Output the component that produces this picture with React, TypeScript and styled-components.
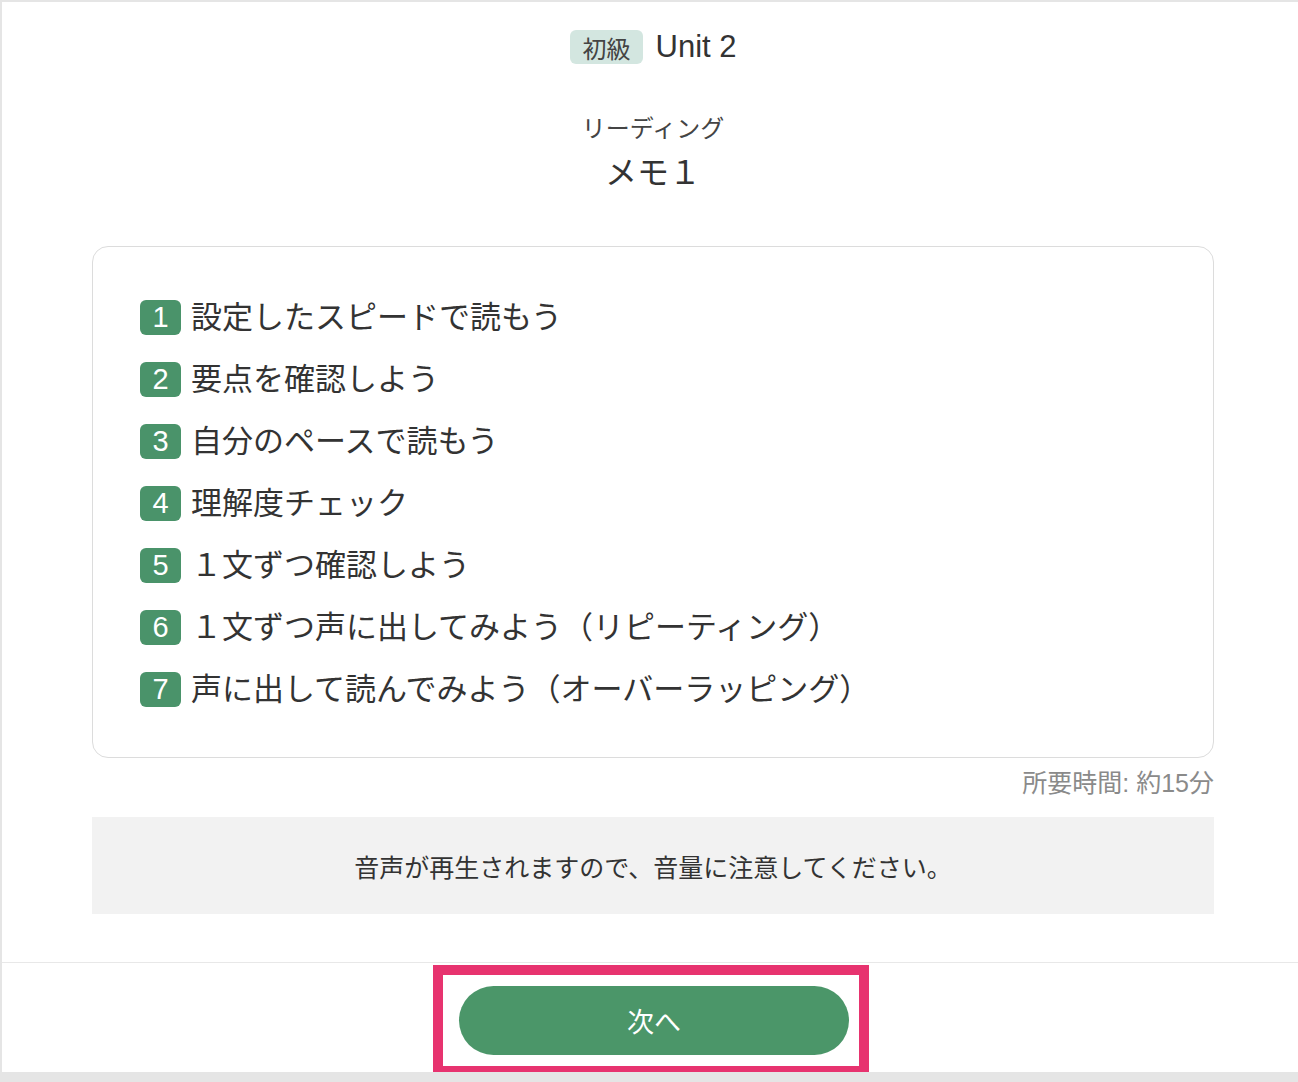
import React from "react";
import styled, { createGlobalStyle } from "styled-components";

const GlobalStyle = createGlobalStyle`
  html, body {
    margin: 0;
    padding: 0;
    background: #e5e5e5;
    overflow-x: hidden;
  }
  body {
    font-family: "Liberation Sans", "Noto Sans CJK JP", sans-serif;
    color: #333;
  }
`;

const Panel = styled.div`
  width: 1302px;
  margin: 2px 0 0 2px;
  background: #fff;
`;

const Main = styled.main`
  width: 1122px;
  margin: 0 auto;
  padding: 28px 0 48px;
  display: flex;
  flex-direction: column;
  align-items: center;
`;

const UnitRow = styled.div`
  display: flex;
  align-items: center;
  gap: 13px;
  height: 34px;
`;

const LevelBadge = styled.span`
  display: inline-flex;
  align-items: center;
  justify-content: center;
  height: 34px;
  padding: 0 12px 0 13px;
  border-radius: 6px;
  background: #d3e6e0;
  color: #444;
  font-size: 24px;
`;

const UnitName = styled.span`
  font-size: 31px;
  color: #333;
`;

const Category = styled.div`
  margin-top: 48px;
  font-size: 24px;
  line-height: 1.4;
  color: #444;
`;

const Title = styled.h1`
  margin: 5px 0 0;
  font-size: 32px;
  font-weight: 400;
  line-height: 1.4;
  color: #333;
`;

const StepCard = styled.ol`
  align-self: stretch;
  margin: 51px 0 0;
  padding: 39px 47px 37px;
  list-style: none;
  border: 1px solid #dcdcdc;
  border-radius: 16px;
`;

const Step = styled.li`
  display: flex;
  align-items: center;
  gap: 10px;
  height: 62px;
  font-size: 31px;
  color: #333;
`;

const StepText = styled.span`
  line-height: 1;
  padding-top: 1px;
`;

const StepNumber = styled.span`
  display: inline-flex;
  align-items: center;
  justify-content: center;
  flex: none;
  width: 41px;
  height: 35px;
  border-radius: 6px;
  background: #4a936a;
  color: #fff;
  font-size: 29px;
  line-height: 1;
`;

const Duration = styled.div`
  align-self: flex-end;
  margin-top: 8px;
  font-size: 25px;
  line-height: 1.4;
  color: #8a8a8a;
`;

const Notice = styled.div`
  align-self: stretch;
  margin-top: 16px;
  height: 97px;
  display: flex;
  align-items: center;
  justify-content: center;
  background: #f2f2f2;
  font-size: 25px;
  color: #333;
`;

const Footer = styled.footer`
  height: 110px;
  border-top: 1px solid #e8e8e8;
  display: flex;
  align-items: center;
  justify-content: center;
  padding-top: 6px;
  box-sizing: border-box;
`;

const Highlight = styled.div`
  position: relative;
  margin-left: 2px;

  &::after {
    content: "";
    position: absolute;
    top: -21px;
    bottom: -21px;
    left: -26px;
    right: -20px;
    border: 10px solid #e7336f;
    pointer-events: none;
  }
`;

const NextButton = styled.button`
  display: block;
  width: 390px;
  height: 69px;
  border: none;
  border-radius: 35px;
  background: #4b9669;
  color: #fff;
  font-family: "Noto Sans CJK JP", sans-serif;
  font-size: 27px;
  cursor: pointer;
`;

const steps = [
  "設定したスピードで読もう",
  "要点を確認しよう",
  "自分のペースで読もう",
  "理解度チェック",
  "１文ずつ確認しよう",
  "１文ずつ声に出してみよう（リピーティング）",
  "声に出して読んでみよう（オーバーラッピング）",
];

export default function App() {
  return (
    <>
      <GlobalStyle />
      <Panel>
        <Main>
          <UnitRow>
            <LevelBadge>初級</LevelBadge>
            <UnitName>Unit 2</UnitName>
          </UnitRow>
          <Category>リーディング</Category>
          <Title>メモ１</Title>

          <StepCard>
            {steps.map((s, i) => (
              <Step key={i}>
                <StepNumber>{i + 1}</StepNumber>
                <StepText>{s}</StepText>
              </Step>
            ))}
          </StepCard>

          <Duration>所要時間: 約15分</Duration>
          <Notice>音声が再生されますので、音量に注意してください。</Notice>
        </Main>
        <Footer>
          <Highlight>
            <NextButton>次へ</NextButton>
          </Highlight>
        </Footer>
      </Panel>
    </>
  );
}
